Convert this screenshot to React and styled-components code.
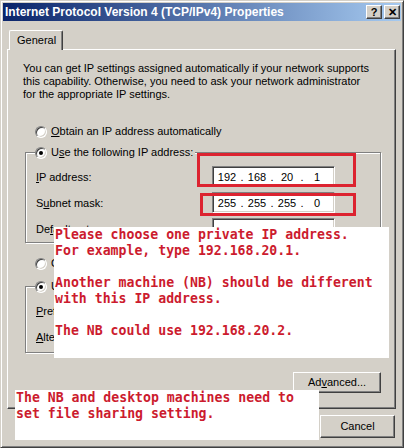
import React from "react"
import styled, { createGlobalStyle } from "styled-components"

const GlobalStyle = createGlobalStyle`
  html, body {
    margin: 0;
    padding: 0;
    background: #d4d0c8;
  }
  body {
    font-family: "Liberation Sans", Arial, sans-serif;
    font-size: 11px;
    color: #000;
  }
`

const raised = `
  background: #d4d0c8;
  border: 1px solid;
  border-color: #fff #404040 #404040 #fff;
  box-shadow: inset -1px -1px 0 #808080;
`

const Window = styled.div`
  position: relative;
  width: 404px;
  height: 448px;
  box-sizing: border-box;
  background: #d4d0c8;
  border: 1px solid;
  border-color: #d4d0c8 #404040 #404040 #d4d0c8;
  box-shadow: inset 1px 1px 0 #fff, inset -1px -1px 0 #808080;
  padding: 2px;
  display: flex;
  flex-direction: column;
  overflow: hidden;
`

const TitleBar = styled.div`
  height: 18px;
  flex: none;
  display: flex;
  align-items: center;
  justify-content: space-between;
  padding: 0 1px 0 2px;
  background: linear-gradient(to right, #0a246a, #a6caf0);
`

const TitleText = styled.span`
  color: #fff;
  font-weight: bold;
  font-size: 12px;
  white-space: nowrap;
`

const TitleButtons = styled.div`
  display: flex;
  gap: 2px;
`

const CaptionButton = styled.div`
  ${raised}
  width: 16px;
  height: 14px;
  box-sizing: border-box;
  display: flex;
  align-items: center;
  justify-content: center;
  font-weight: bold;
  font-size: 11px;
  line-height: 1;
`

const Body = styled.div`
  flex: 1;
  display: flex;
  flex-direction: column;
  padding: 9px 5px 0 4px;
`

const TabStrip = styled.div`
  display: flex;
  padding-left: 2px;
  height: 19px;
`

const Tab = styled.div`
  position: relative;
  z-index: 1;
  width: 54px;
  height: 20px;
  box-sizing: border-box;
  padding: 3px 0 0 7px;
  background: #d4d0c8;
  border-top: 1px solid #fff;
  border-left: 1px solid #fff;
  border-right: 1px solid #404040;
  box-shadow: inset -1px 0 0 #808080;
  border-radius: 2px 2px 0 0;
`

const Panel = styled.div`
  height: 360px;
  box-sizing: border-box;
  border: 1px solid;
  border-color: #fff #404040 #404040 #fff;
  box-shadow: inset -1px -1px 0 #808080;
  padding: 12px 13px 0 15px;
  display: flex;
  flex-direction: column;
`

const Intro = styled.p`
  margin: 0;
  line-height: 13px;
`

const RadioRow = styled.div`
  display: flex;
  align-items: center;
  gap: 4px;
  height: 13px;
  line-height: 13px;
  margin-top: ${p => p.$top}px;
  margin-left: 12px;
`

const RadioDot = styled.span`
  width: 12px;
  height: 12px;
  flex: none;
  box-sizing: border-box;
  border-radius: 50%;
  background: #fff;
  border: 1px solid;
  border-color: #808080 #fff #fff #808080;
  box-shadow: inset 1px 1px 0 #404040, inset -1px -1px 0 #d4d0c8;
  display: flex;
  align-items: center;
  justify-content: center;
  &::after {
    content: "";
    width: 4px;
    height: 4px;
    border-radius: 50%;
    background: ${p => (p.$checked ? "#000" : "transparent")};
  }
`

const Group = styled.fieldset`
  width: 356px;
  box-sizing: border-box;
  margin: ${p => p.$top}px 0 0 2px;
  padding: 7px 10px ${p => p.$bottom}px 9px;
  border: 1px solid #808080;
  box-shadow: inset 1px 1px 0 #fff, 1px 1px 0 #fff;
  min-width: 0;
`

const Legend = styled.legend`
  display: flex;
  align-items: center;
  gap: 4px;
  height: 13px;
  line-height: 13px;
  padding: 0 2px 0 0;
  background: #d4d0c8;
`

const Rows = styled.div`
  display: grid;
  grid-template-columns: 176px 123px;
  grid-auto-rows: 21px;
  row-gap: 5px;
  align-items: center;
  padding-left: 1px;
`

const Label = styled.span`
  white-space: nowrap;
`

const IpField = styled.div`
  width: 123px;
  height: 21px;
  box-sizing: border-box;
  background: #fff;
  border: 1px solid;
  border-color: #808080 #fff #fff #808080;
  box-shadow: inset 1px 1px 0 #404040, inset -1px -1px 0 #d4d0c8;
  display: flex;
  align-items: center;
  padding-left: 1px;
`

const Octet = styled.span`
  width: 26px;
  text-align: center;
`

const Dot = styled.span`
  width: 4px;
  text-align: center;
`

const ButtonRow = styled.div`
  display: flex;
  justify-content: flex-end;
  gap: 6px;
  width: ${p => p.$width};
  margin: ${p => p.$margin};
`

const Button = styled.div`
  ${raised}
  width: ${p => p.$w}px;
  height: ${p => p.$h}px;
  box-sizing: border-box;
  display: flex;
  align-items: center;
  justify-content: center;
  padding-bottom: 1px;
`

const Highlight = styled.div`
  position: absolute;
  left: ${p => p.$x}px;
  top: ${p => p.$y}px;
  width: ${p => p.$w}px;
  height: ${p => p.$h}px;
  box-sizing: border-box;
  border: 3px solid #dc2330;
  z-index: 2;
`

const Note = styled.div`
  position: absolute;
  left: ${p => p.$x}px;
  top: ${p => p.$y}px;
  width: ${p => p.$w}px;
  height: ${p => p.$h}px;
  box-sizing: border-box;
  padding: 0 1px;
  background: #fff;
  color: #cc1b2e;
  font-family: "DejaVu Sans Mono", "Liberation Mono", monospace;
  font-weight: bold;
  font-size: 13.2px;
  line-height: 16px;
  white-space: pre;
  z-index: 3;
`

const Ip = ({ value = ["", "", "", ""] }) => (
  <IpField>
    <Octet>{value[0]}</Octet>
    <Dot>.</Dot>
    <Octet>{value[1]}</Octet>
    <Dot>.</Dot>
    <Octet>{value[2]}</Octet>
    <Dot>.</Dot>
    <Octet>{value[3]}</Octet>
  </IpField>
)

const App = () => (
  <Window>
    <GlobalStyle />
    <TitleBar>
      <TitleText>Internet Protocol Version 4 (TCP/IPv4) Properties</TitleText>
      <TitleButtons>
        <CaptionButton>?</CaptionButton>
        <CaptionButton>✕</CaptionButton>
      </TitleButtons>
    </TitleBar>
    <Body>
      <TabStrip>
        <Tab>General</Tab>
      </TabStrip>
      <Panel>
        <Intro>
          You can get IP settings assigned automatically if your network supports<br />
          this capability. Otherwise, you need to ask your network administrator<br />
          for the appropriate IP settings.
        </Intro>
        <RadioRow $top={24}>
          <RadioDot />
          <span><u>O</u>btain an IP address automatically</span>
        </RadioRow>
        <Group $top={8} $bottom={3}>
          <Legend>
            <RadioDot $checked />
            <span>U<u>s</u>e the following IP address:</span>
          </Legend>
          <Rows>
            <Label><u>I</u>P address:</Label>
            <Ip value={["192", "168", "20", "1"]} />
            <Label>S<u>u</u>bnet mask:</Label>
            <Ip value={["255", "255", "255", "0"]} />
            <Label>De<u>f</u>ault gateway:</Label>
            <Ip />
          </Rows>
        </Group>
        <RadioRow $top={14}>
          <RadioDot />
          <span>O<u>b</u>tain DNS server address automatically</span>
        </RadioRow>
        <Group $top={10} $bottom={5}>
          <Legend>
            <RadioDot $checked />
            <span>Us<u>e</u> the following DNS server addresses:</span>
          </Legend>
          <Rows>
            <Label><u>P</u>referred DNS server:</Label>
            <Ip />
            <Label><u>A</u>lternate DNS server:</Label>
            <Ip />
          </Rows>
        </Group>
        <ButtonRow $width="356px" $margin="19px 0 0 2px">
          <Button $w={88} $h={21}>Ad<u>v</u>anced...</Button>
        </ButtonRow>
      </Panel>
      <ButtonRow $width="auto" $margin="6px 1px 0 0">
        <Button $w={75} $h={23}>OK</Button>
        <Button $w={75} $h={23}>Cancel</Button>
      </ButtonRow>
    </Body>

    <Highlight $x={196} $y={152} $w={159} $h={34} />
    <Highlight $x={199} $y={192} $w={156} $h={23} />

    <Note $x={53} $y={226} $w={335} $h={131}>
      {"Please choose one private IP address.\nFor example, type 192.168.20.1.\n\nAnother machine (NB) should be different\nwith this IP address.\n\nThe NB could use 192.168.20.2."}
    </Note>
    <Note $x={14} $y={389} $w={304} $h={50}>
      {"The NB and desktop machines need to\nset file sharing setting."}
    </Note>
  </Window>
)

export default App
